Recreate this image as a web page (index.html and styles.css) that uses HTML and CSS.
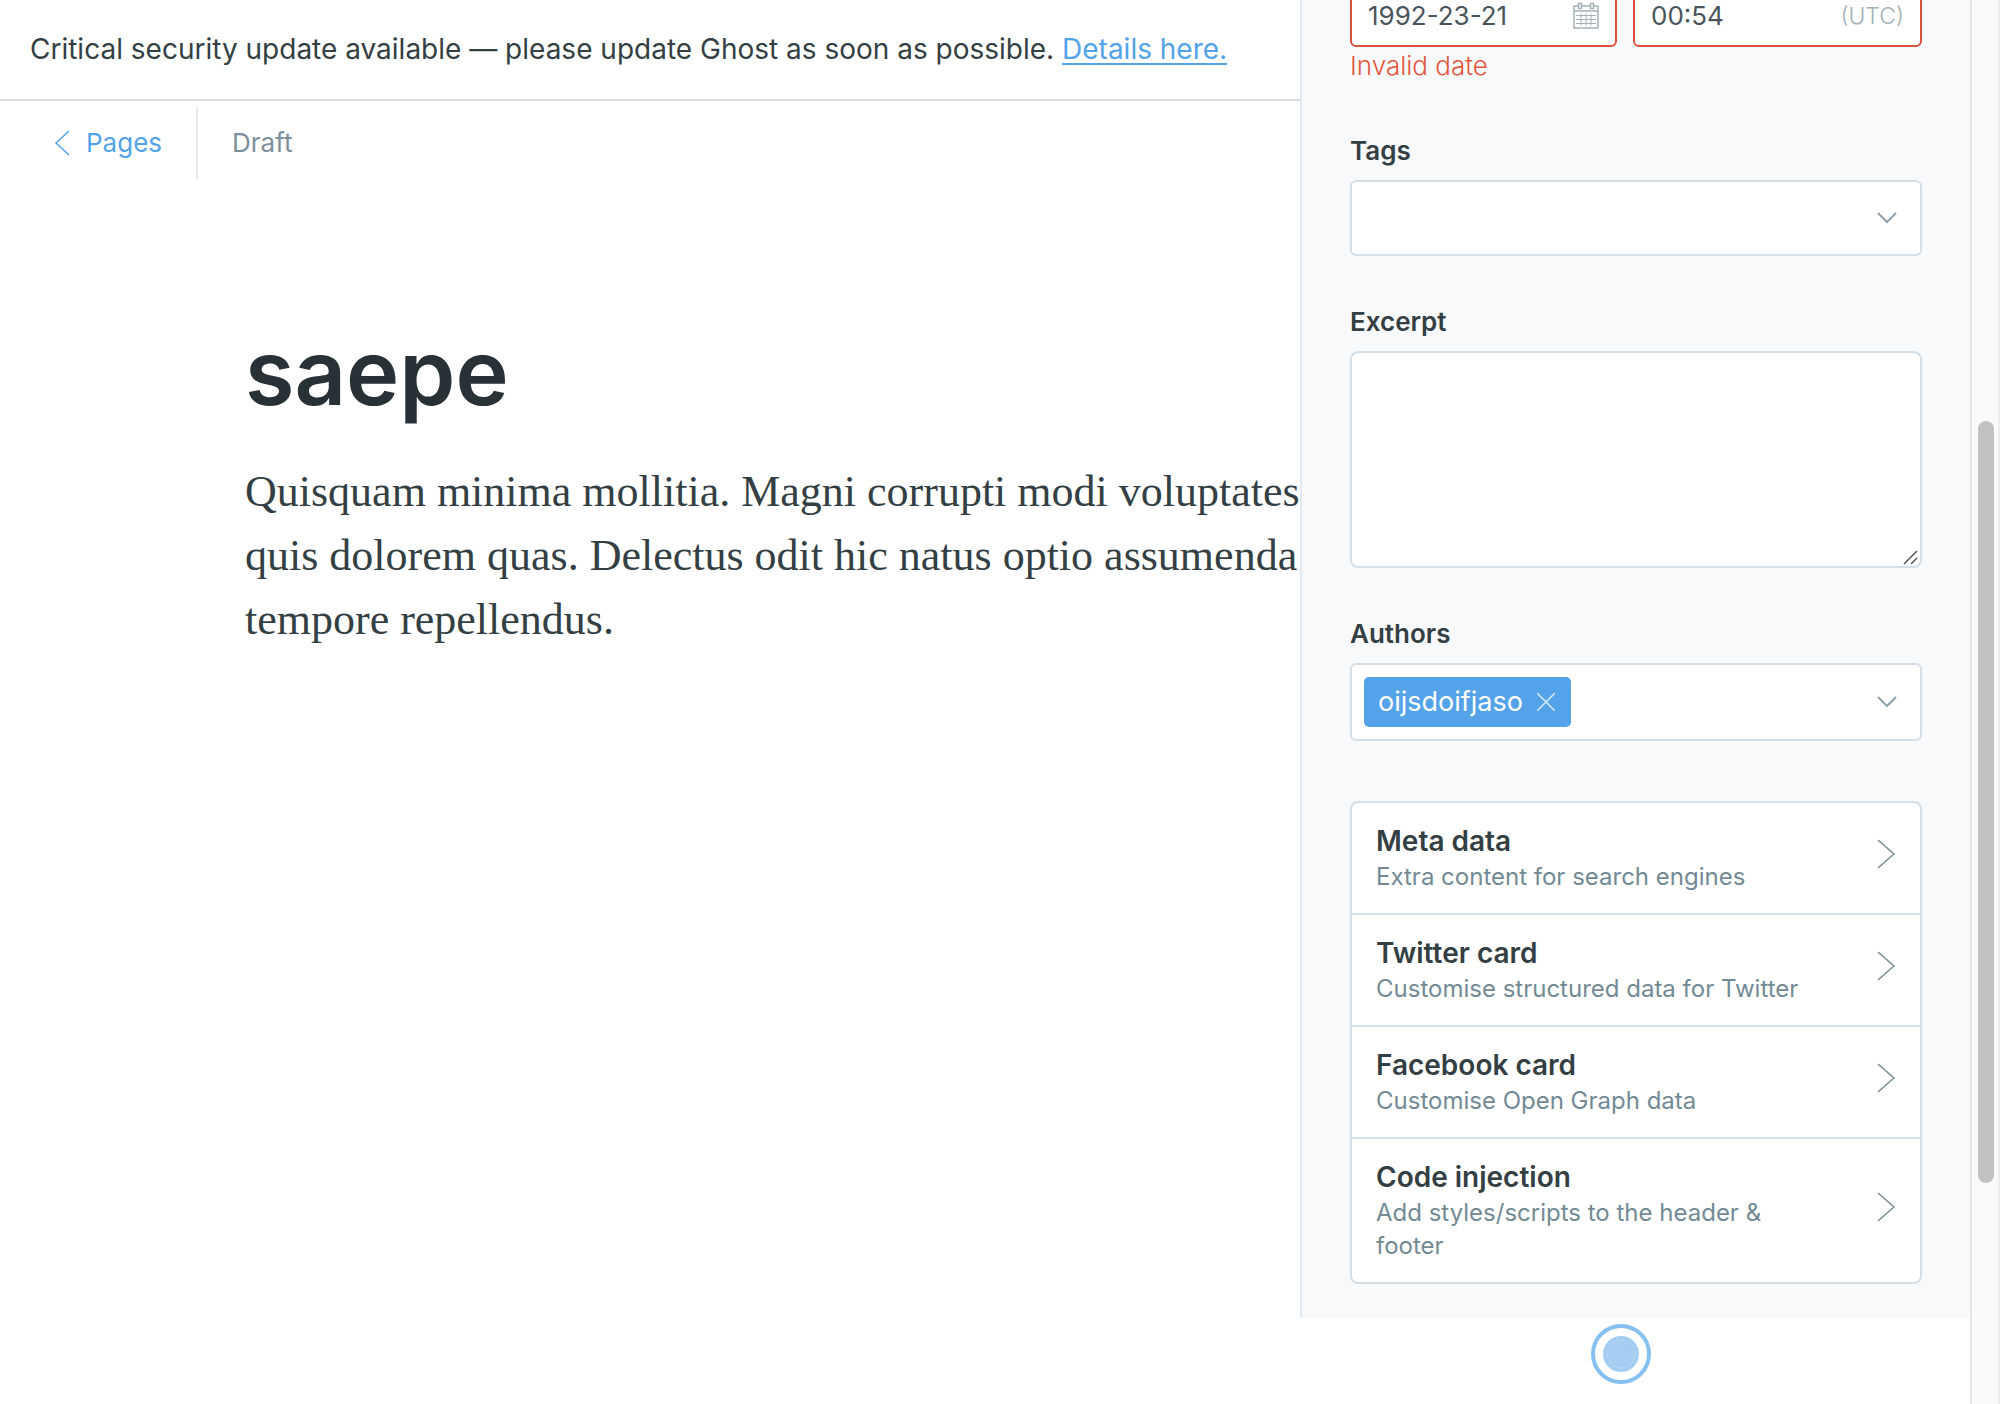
FILE: index.html
```html
<!DOCTYPE html>
<html lang="en">
<head>
<meta charset="utf-8">
<title>saepe - Page editor</title>
<link rel="stylesheet" href="styles.css">
</head>
<body>
<div class="app">
  <main class="editor">
    <aside class="alert">Critical security update available — please update Ghost as soon as possible. <a class="alert-link" href="#">Details here.</a></aside>
    <header class="toolbar">
      <a class="back" href="#">
        <svg class="back-icon" width="16" height="26" viewBox="0 0 16 26" aria-hidden="true"><path d="M15 1L2 13l13 12"/></svg>
        Pages
      </a>
      <span class="status">Draft</span>
    </header>
    <article class="content">
      <h1 class="title">saepe</h1>
      <p class="body">Quisquam minima mollitia. Magni corrupti modi voluptates quis dolorem quas. Delectus odit hic natus optio assumenda tempore repellendus.</p>
    </article>
  </main>
  <div class="side">
    <form class="settings">
      <div class="date-row">
        <div class="date-field">
          <input class="date-input" type="text" aria-label="Publish date" value="1992-23-21">
          <svg class="calendar" width="26" height="28" viewBox="0 0 26 28" aria-hidden="true"><path class="calendar-frame" d="M5 4H1v22h24V4h-4M9 4h8M1 9h24M5.500 1.500h3v5h-3zM17.500 1.500h3v5h-3z"/><path d="M3 13.500h20M3 17.500h20M3 21.500h20M8 11.500v12M13 11.500v12M18 11.500v12"/></svg>
        </div>
        <div class="date-field">
          <input class="date-input" type="text" aria-label="Publish time" value="00:54">
          <span class="zone">(UTC)</span>
        </div>
      </div>
      <p class="error">Invalid date</p>

      <div class="group">
        <label class="label" for="tags">Tags</label>
        <div class="picker">
          <select class="picker-select" id="tags"><option></option></select>
          <svg class="caret" width="20" height="12" viewBox="0 0 20 12" aria-hidden="true"><path d="M1 1l9 9 9-9"/></svg>
        </div>
      </div>

      <div class="group">
        <label class="label" for="excerpt">Excerpt</label>
        <div class="excerpt">
          <textarea class="excerpt-input" id="excerpt"></textarea>
          <svg class="grip" width="16" height="16" viewBox="0 0 16 16" aria-hidden="true"><path d="M1 15L14 2M8 15l6-6"/></svg>
        </div>
      </div>

      <div class="group">
        <label class="label" for="authors">Authors</label>
        <div class="picker picker-tokens">
          <span class="token">oijsdoifjaso
            <button class="token-remove" type="button" aria-label="Remove oijsdoifjaso"><svg width="18" height="18" viewBox="0 0 18 18" aria-hidden="true"><path d="M0 0l18 18M18 0L0 18"/></svg></button>
          </span>
          <input class="picker-input" id="authors" type="text">
          <svg class="caret" width="20" height="12" viewBox="0 0 20 12" aria-hidden="true"><path d="M1 1l9 9 9-9"/></svg>
        </div>
      </div>

      <div class="nav">
        <button class="nav-item" type="button">
          <span class="nav-text"><b class="nav-title">Meta data</b><span class="nav-sub">Extra content for search engines</span></span>
          <svg class="nav-icon" width="18" height="30" viewBox="0 0 18 30" aria-hidden="true"><path d="M1 1l16 14L1 29"/></svg>
        </button>
        <button class="nav-item" type="button">
          <span class="nav-text"><b class="nav-title">Twitter card</b><span class="nav-sub">Customise structured data for Twitter</span></span>
          <svg class="nav-icon" width="18" height="30" viewBox="0 0 18 30" aria-hidden="true"><path d="M1 1l16 14L1 29"/></svg>
        </button>
        <button class="nav-item" type="button">
          <span class="nav-text"><b class="nav-title">Facebook card</b><span class="nav-sub">Customise Open Graph data</span></span>
          <svg class="nav-icon" width="18" height="30" viewBox="0 0 18 30" aria-hidden="true"><path d="M1 1l16 14L1 29"/></svg>
        </button>
        <button class="nav-item" type="button">
          <span class="nav-text"><b class="nav-title">Code injection</b><span class="nav-sub">Add styles/scripts to the header &amp; footer</span></span>
          <svg class="nav-icon" width="18" height="30" viewBox="0 0 18 30" aria-hidden="true"><path d="M1 1l16 14L1 29"/></svg>
        </button>
      </div>
    </form>
    <svg class="pointer" width="60" height="60" viewBox="0 0 60 60" aria-hidden="true"><circle class="pointer-ring" cx="30" cy="30" r="28"/><circle class="pointer-dot" cx="30" cy="30" r="18"/><circle class="pointer-line" cx="30" cy="30" r="14"/></svg>
  </div>
  <div class="scrollbar"><span class="thumb"></span></div>
</div>
</body>
</html>
```
FILE: styles.css
```css
* {
  box-sizing: border-box;
}

body {
  margin: 0;
  background: #fff;
  color: #343f44;
  font-family: Inter, "Liberation Sans", sans-serif;
  font-size: 26px;
  line-height: 36px;
}

input,
select,
textarea,
button {
  margin: 0;
  font: inherit;
  color: inherit;
}

svg {
  flex: none;
  fill: none;
  stroke: currentColor;
}

.app {
  display: grid;
  grid-template-columns: minmax(0, 1fr) 670px 30px;
  height: 100vh;
  overflow: hidden;
}

/* Editor */
.editor {
  overflow: hidden;
}

.alert {
  padding: 29px 30px 30px;
  border-bottom: 2px solid #dbdedf;
  font-size: 28px;
  line-height: 40px;
  white-space: nowrap;
}

.alert-link {
  color: #54a3e8;
  text-underline-offset: 4px;
  text-decoration-thickness: 2px;
}

.toolbar {
  display: flex;
  align-items: center;
  margin-top: 6px;
  height: 72px;
}

.back {
  display: flex;
  align-items: center;
  gap: 16px;
  height: 100%;
  padding: 0 34px 0 54px;
  border-right: 2px solid #e3ebf1;
  color: #54a3e8;
  text-decoration: none;
}

.back-icon {
  stroke-width: 1.500;
}

.status {
  padding-left: 34px;
  color: #7c8f9a;
}

.content {
  width: 1360px;
  padding: 139px 0 0 245px;
}

.title {
  margin: 0 0 32px;
  color: #283135;
  font-size: 90px;
  font-weight: 600;
  line-height: 110px;
}

.body {
  margin: 0;
  font-family: Georgia, "Liberation Serif", serif;
  font-size: 44px;
  line-height: 64px;
}

/* Settings panel */
.side {
  position: relative;
}

.settings {
  padding: 0 48px 34px;
  border-left: 2px solid #e1eaf2;
  background: #f8f9fb;
}

.date-row {
  display: grid;
  grid-template-columns: minmax(0, 267fr) minmax(0, 289fr);
  gap: 16px;
  margin-top: -15px;
}

.date-field {
  display: flex;
  align-items: center;
  height: 62px;
  padding: 0 16px;
  border: 2px solid #d9513a;
  border-radius: 6px;
  background: #fff;
}

.date-input {
  flex: 1;
  min-width: 0;
  padding: 0;
  border: 0;
  outline: 0;
  background: none;
  color: #4a555b;
}

.calendar {
  color: #a5b1b8;
}

.calendar-frame {
  stroke-width: 1.500;
}

.zone {
  color: #a5b1b8;
  font-size: 23px;
  font-weight: 300;
}

.error {
  margin: 1px 0 0;
  color: #e0573d;
  font-weight: 300;
}

.group {
  margin-bottom: 48px;
}

.error + .group {
  margin-top: 49px;
}

.label {
  display: block;
  margin-bottom: 11px;
  font-weight: 600;
}

.picker {
  position: relative;
  display: flex;
  align-items: center;
  height: 76px;
  padding: 0 23px 0 12px;
  border: 2px solid #d3dee7;
  border-radius: 6px;
  background: #fff;
}

.picker-tokens {
  height: 78px;
}

.picker-select,
.picker-input {
  flex: 1;
  min-width: 0;
  height: 100%;
  padding: 0;
  border: 0;
  outline: 0;
  background: none;
  appearance: none;
}

.caret {
  color: #8fa1ad;
  stroke-width: 2;
}

.token {
  display: flex;
  align-items: center;
  gap: 14px;
  height: 50px;
  padding: 0 16px 0 14px;
  border-radius: 5px;
  background: #54a3e8;
  color: #fff;
  font-size: 27px;
}

.token-remove {
  display: flex;
  padding: 0;
  border: 0;
  background: none;
  color: #d8eafa;
  stroke-width: 1.500;
}

.excerpt {
  position: relative;
}

.excerpt-input {
  display: block;
  width: 100%;
  height: 217px;
  padding: 12px 16px;
  border: 2px solid #d3dee7;
  border-radius: 8px;
  outline: 0;
  background: #fff;
  resize: none;
}

.grip {
  position: absolute;
  right: 3px;
  bottom: 3px;
  color: #555;
  stroke-width: 1.500;
}

.nav {
  margin-top: 60px;
  border: 2px solid #d3dee7;
  border-radius: 8px;
  background: #fff;
}

.nav-item {
  display: flex;
  align-items: center;
  justify-content: space-between;
  width: 100%;
  padding: 20px 25px 20px 24px;
  border: 0;
  border-bottom: 2px solid #d3dee7;
  background: none;
  text-align: left;
}

.nav-item:last-child {
  border-bottom: 0;
}

.nav-text {
  max-width: 450px;
}

.nav-title {
  display: block;
  margin-bottom: 1px;
  font-size: 28px;
  font-weight: 600;
  line-height: 36px;
}

.nav-sub {
  display: block;
  color: #738a94;
  font-size: 24px;
  line-height: 33px;
}

.nav-icon {
  margin-bottom: 8px;
  color: #738a94;
  stroke-width: 1.500;
}

/* Pointer halo, over the page */
.pointer {
  position: absolute;
  top: 1324px;
  left: 291px;
}

.pointer-ring {
  stroke: #86c0f0;
  stroke-width: 4;
}

.pointer-dot {
  fill: #a3cdf1;
  stroke: none;
}

.pointer-line {
  stroke: #b3d6f4;
}

/* Scrollbar */
.scrollbar {
  display: grid;
  grid-template-rows: 421fr 762fr 221fr;
  padding: 0 4px 0 6px;
  border-left: 2px solid #e5e7e8;
  border-right: 2px solid #ececec;
  background: #fafafa;
}

.thumb {
  grid-row: 2;
  border-radius: 8px;
  background: #c1c1c1;
}
```
